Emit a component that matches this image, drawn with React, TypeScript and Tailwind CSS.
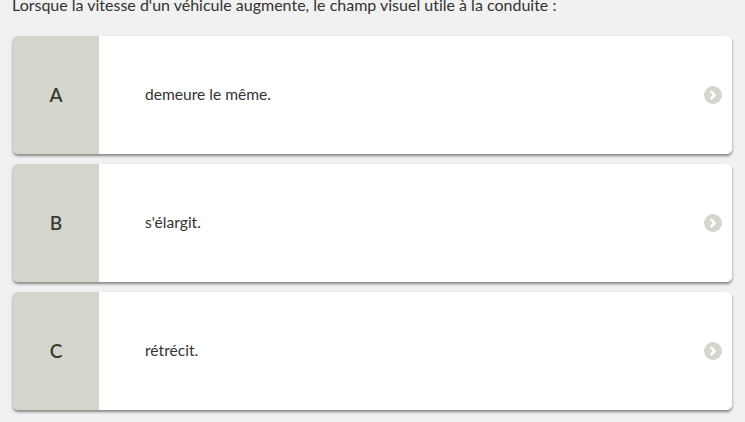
const answers = [
  { letter: "A", text: "demeure le même." },
  { letter: "B", text: "s'élargit." },
  { letter: "C", text: "rétrécit." },
];

function Chevron() {
  return (
    <svg width="18" height="18" viewBox="0 0 18 18">
      <circle cx="9" cy="9" r="9" fill="#d5d7cd" />
      <path d="M7.4 5.8 L10.6 9 L7.4 12.2" fill="none" stroke="#ffffff" strokeWidth="2.6" strokeLinecap="round" strokeLinejoin="round" />
    </svg>
  );
}

export default function App() {
  return (
    <div className="w-[745px] h-[422px] overflow-hidden bg-[#f1f1f1] font-['Lato','Liberation_Sans',sans-serif] text-[#333] [font-variant-ligatures:none]">
      <p className="mt-[-5px] pl-[12px] text-[16px] leading-[20px]">
        Lorsque la vitesse d'un véhicule augmente, le champ visuel utile à la conduite&nbsp;:
      </p>
      <div className="mt-[21px] px-[13px] flex flex-col gap-[10px]">
        {answers.map((a) => (
          <div
            key={a.letter}
            className="h-[118px] flex rounded-[5px] bg-white overflow-hidden shadow-[0_2px_3px_rgba(0,0,0,0.45)]"
          >
            <div className="w-[86px] bg-[#d4d6cc] flex items-center justify-center text-[19px] font-semibold text-[#3a3a3a]">
              {a.letter}
            </div>
            <div className="flex-1 flex items-center pl-[46px] pr-[10px] text-[15.6px]">
              <span className="flex-1">{a.text}</span>
              <Chevron />
            </div>
          </div>
        ))}
      </div>
    </div>
  );
}
